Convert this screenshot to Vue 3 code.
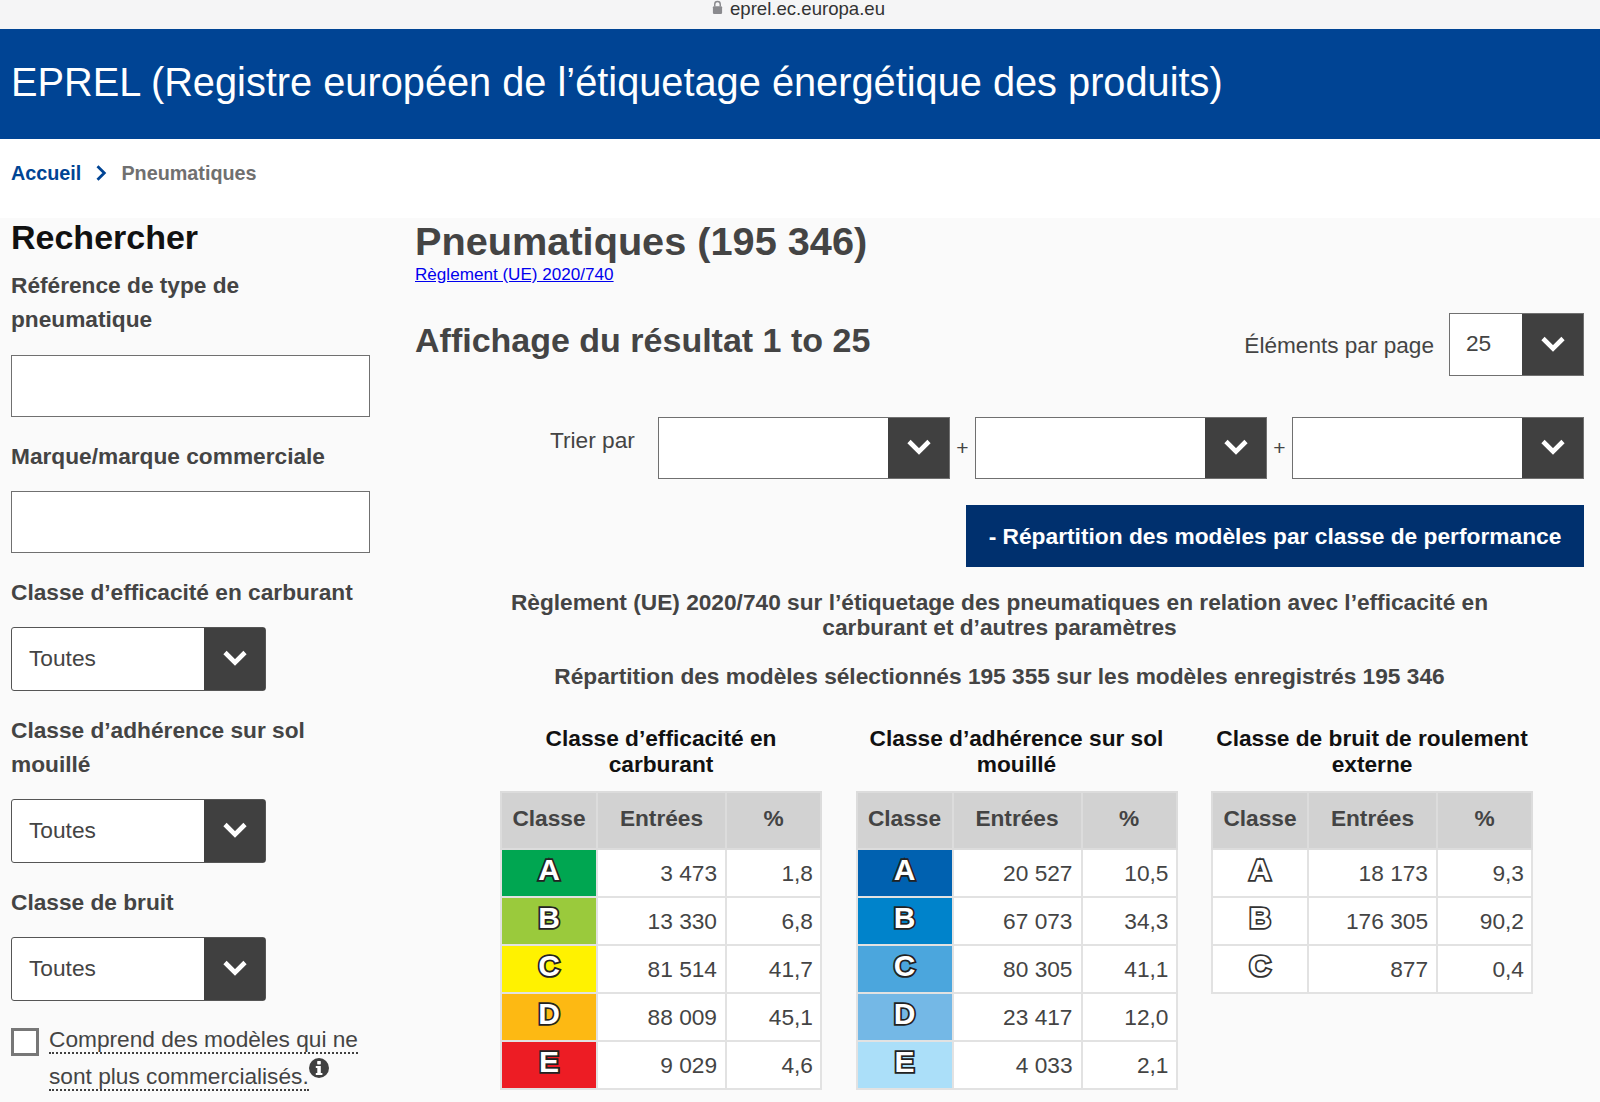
<script setup>
const sorts = [0, 1, 2]
const fuelRows = [
  ['A', '3 473', '1,8', '#00a651'],
  ['B', '13 330', '6,8', '#9aca3c'],
  ['C', '81 514', '41,7', '#fff200'],
  ['D', '88 009', '45,1', '#fdb913'],
  ['E', '9 029', '4,6', '#ed1c24']
]
const wetRows = [
  ['A', '20 527', '10,5', '#0061b0'],
  ['B', '67 073', '34,3', '#0083cb'],
  ['C', '80 305', '41,1', '#4ba6dd'],
  ['D', '23 417', '12,0', '#74b8e6'],
  ['E', '4 033', '2,1', '#abdff9']
]
const noiseRows = [
  ['A', '18 173', '9,3', ''],
  ['B', '176 305', '90,2', ''],
  ['C', '877', '0,4', '']
]
const tables = [
  { title: ['Classe d’efficacité en', 'carburant'], rows: fuelRows },
  { title: ['Classe d’adhérence sur sol', 'mouillé'], rows: wetRows },
  { title: ['Classe de bruit de roulement', 'externe'], rows: noiseRows, outline: true }
]
const filters = [
  { label: ['Classe d’efficacité en carburant'] },
  { label: ['Classe d’adhérence sur sol', 'mouillé'] },
  { label: ['Classe de bruit'] }
]
</script>

<template>
  <div class="page">
    <div class="topbar">
      <svg class="lock" viewBox="0 0 12 16" width="11" height="15">
        <path d="M3 7V4.5a3 3 0 0 1 6 0V7" fill="none" stroke="#8a8a8e" stroke-width="1.6" />
        <rect x="1" y="6.5" width="10" height="8.5" rx="1.3" fill="#8a8a8e" />
      </svg>
      <span>eprel.ec.europa.eu</span>
    </div>
    <header class="banner">EPREL (Registre européen de l’étiquetage énergétique des produits)</header>
    <nav class="crumbs">
      <a class="home">Accueil</a>
      <svg class="crumb-sep" viewBox="0 0 12 16" width="12" height="16">
        <path d="M2.5 1.2 9.3 8l-6.8 6.8" fill="none" stroke="#004494" stroke-width="2.8" />
      </svg>
      <span class="current">Pneumatiques</span>
    </nav>
    <main class="content">
      <aside class="side">
        <h2 class="search-title">Rechercher</h2>
        <div class="label first">Référence de type de<br />pneumatique</div>
        <div class="text-input"></div>
        <div class="label">Marque/marque commerciale</div>
        <div class="text-input"></div>
        <template v-for="f in filters" :key="f.label[0]">
          <div class="label">
            <template v-for="(l, i) in f.label" :key="l"><br v-if="i" />{{ l }}</template>
          </div>
          <div class="select side-select">
            <span class="select-value">Toutes</span>
            <span class="arrow">
              <svg viewBox="0 0 26 20" width="26" height="20"><path d="M3 3.5l10 10 10-10" fill="none" stroke="#fff" stroke-width="4.6" /></svg>
            </span>
          </div>
        </template>
        <div class="check-row">
          <span class="check"></span>
          <div class="check-text">
            <span class="dotted">Comprend des modèles qui ne</span><br />
            <span class="dotted">sont plus commercialisés.</span><svg class="info" viewBox="0 0 20 20" width="20" height="20">
              <circle cx="10" cy="10" r="10" fill="#404040" />
              <rect x="8.2" y="3" width="3.6" height="3.4" rx=".6" fill="#fff" />
              <path d="M6.8 8h5v7h1.6v2H6.8v-2h1.5v-5H6.8z" fill="#fff" />
            </svg>
          </div>
        </div>
      </aside>
      <section class="results">
        <h1 class="page-title">Pneumatiques (195 346)</h1>
        <a class="reg-link">Règlement (UE) 2020/740</a>
        <div class="result-head">
          <h2 class="result-title">Affichage du résultat 1 to 25</h2>
          <div class="per-page">
            <span class="per-label">Éléments par page</span>
            <div class="select page-select">
              <span class="select-value small">25</span>
              <span class="arrow">
                <svg viewBox="0 0 26 20" width="26" height="20"><path d="M3 3.5l10 10 10-10" fill="none" stroke="#fff" stroke-width="4.6" /></svg>
              </span>
            </div>
          </div>
        </div>
        <div class="sort-row">
          <span class="sort-label">Trier par</span>
          <template v-for="s in sorts" :key="s">
            <span v-if="s" class="plus">+</span>
            <div class="select sort-select">
              <span class="select-value"></span>
              <span class="arrow">
                <svg viewBox="0 0 26 20" width="26" height="20"><path d="M3 3.5l10 10 10-10" fill="none" stroke="#fff" stroke-width="4.6" /></svg>
              </span>
            </div>
          </template>
        </div>
        <div class="toggle-row">
          <button class="toggle">- Répartition des modèles par classe de performance</button>
        </div>
        <div class="reg-title">Règlement (UE) 2020/740 sur l’étiquetage des pneumatiques en relation avec l’efficacité en<br />carburant et d’autres paramètres</div>
        <div class="reg-sub">Répartition des modèles sélectionnés 195 355 sur les modèles enregistrés 195 346</div>
        <div class="tables">
          <div v-for="t in tables" :key="t.title[0]" class="table-col">
            <div class="table-title">{{ t.title[0] }}<br />{{ t.title[1] }}</div>
            <table>
              <thead>
                <tr><th class="c1">Classe</th><th class="c2">Entrées</th><th class="c3">%</th></tr>
              </thead>
              <tbody>
                <tr v-for="r in t.rows" :key="r[0]">
                  <td class="letter-cell" :style="{ background: r[3] || '#fff' }">
                    <span class="letter" :class="{ outline: t.outline }">{{ r[0] }}</span>
                  </td>
                  <td class="num num-a">{{ r[1] }}</td>
                  <td class="num num-b">{{ r[2] }}</td>
                </tr>
              </tbody>
            </table>
          </div>
        </div>
      </section>
    </main>
  </div>
</template>

<style>
html, body { margin: 0; background: #fafafa; }
</style>

<style scoped>
.page {
  width: 1600px;
  height: 1102px;
  overflow: hidden;
  font-family: "Liberation Sans", Arial, sans-serif;
  color: #444;
  background: #fafafa;
}
.topbar {
  height: 29px;
  background: #f5f5f6;
  display: flex;
  justify-content: center;
  align-items: flex-start;
  gap: 7px;
  font-size: 18.6px;
  line-height: 18px;
  color: #333;
  padding-right: 3px;
  box-sizing: border-box;
}
.banner {
  height: 110px;
  background: #004494;
  color: #fff;
  font-size: 39.75px;
  line-height: 106px;
  padding-left: 11px;
  white-space: nowrap;
}
.crumbs {
  height: 79px;
  background: #fff;
  display: flex;
  align-items: center;
  gap: 14px;
  padding-left: 11px;
  font-size: 19.8px;
  font-weight: 700;
  box-sizing: border-box;
  padding-bottom: 11px;
}
.home { color: #004494; }
.current { color: #707070; }
.content { display: flex; }
.side { width: 404px; padding-left: 11px; flex: none; }
.search-title {
  margin: 0;
  font-size: 34px;
  line-height: 38px;
  color: #111;
  font-weight: 700;
}
.label {
  font-size: 22.7px;
  line-height: 34px;
  font-weight: 700;
  color: #444;
  margin-top: 22px;
  margin-bottom: 18px;
}
.label.first { margin-top: 12px; margin-bottom: 19px; }
.text-input {
  width: 359px;
  height: 62px;
  box-sizing: border-box;
  background: #fff;
  border: 1.5px solid #707070;
}
.select {
  box-sizing: border-box;
  display: flex;
  background: #fff;
  border: 1.5px solid #707070;
}
.side-select { width: 255px; height: 64px; border-radius: 3px; border-color: #555; }
.page-select { width: 135px; height: 63px; }
.sort-select { flex: 1; height: 62px; }
.select-value {
  flex: 1;
  font-size: 22.7px;
  line-height: 60px;
  padding-left: 17px;
  color: #444;
}
.select-value.small { padding-left: 16px; line-height: 58px; }
.arrow {
  width: 61px;
  flex: none;
  background: #404040;
  display: flex;
  align-items: center;
  justify-content: center;
}
.check-row { display: flex; gap: 10px; margin-top: 27px; }
.check {
  width: 28px;
  height: 28px;
  box-sizing: border-box;
  border: 3px solid #777;
  background: #fff;
  flex: none;
}
.check-text { font-size: 22.7px; line-height: 36.6px; margin-top: -7px; white-space: nowrap; }
.dotted { border-bottom: 2px dotted #404040; }
.info { vertical-align: 12px; margin: -14px 0 -6px; }
.results { flex: 1; min-width: 0; padding-right: 16px; }
.page-title {
  margin: 0;
  font-size: 39.7px;
  line-height: 46px;
  font-weight: 700;
  color: #444;
}
.reg-link {
  display: block;
  margin-top: 1px;
  font-size: 17.1px;
  line-height: 20px;
  color: #0000ee;
  text-decoration: underline;
}
.result-head {
  display: flex;
  justify-content: space-between;
  margin-top: 28px;
}
.result-title {
  margin: 0;
  font-size: 34px;
  line-height: 54px;
  font-weight: 700;
  color: #444;
}
.per-page {
  display: flex;
  gap: 15px;
  font-size: 22.6px;
}
.per-label { line-height: 66px; }
.sort-row {
  display: flex;
  margin-top: 38px;
  padding-left: 135px;
  height: 62px;
}
.sort-label { font-size: 22.7px; line-height: 46px; width: 108px; flex: none; }
.plus { width: 25px; text-align: center; font-size: 21px; line-height: 62px; flex: none; }
.toggle-row { display: flex; justify-content: flex-end; margin-top: 26px; }
.toggle {
  width: 618px;
  height: 62px;
  border: 0;
  padding: 0;
  background: #00306e;
  color: #fff;
  font: 700 22.75px "Liberation Sans", Arial, sans-serif;
}
.reg-title {
  margin-top: 23px;
  text-align: center;
  font-size: 22.7px;
  line-height: 25px;
  font-weight: 700;
}
.reg-sub {
  margin-top: 23px;
  text-align: center;
  font-size: 22.7px;
  line-height: 26px;
  font-weight: 700;
}
.tables {
  display: flex;
  gap: 33.5px;
  margin-top: 37px;
  padding-left: 85px;
}
.table-col { width: 322px; flex: none; }
.table-title {
  text-align: center;
  font-size: 22.7px;
  line-height: 25.5px;
  font-weight: 700;
  color: #111;
  height: 65px;
  white-space: nowrap;
  margin: 0 -8px;
}
table {
  width: 320px;
  table-layout: fixed;
  border-collapse: collapse;
}
th, td {
  box-sizing: border-box;
  border: 2.5px solid #e2e2e2;
  padding: 0;
}
th {
  height: 57px;
  background: #d2d2d2;
  border-color: #dcdcdc;
  font-size: 22.7px;
  font-weight: 700;
  color: #444;
  padding-bottom: 4px;
}
.c1 { width: 96px; }
.c2 { width: 129px; }
.c3 { width: 95px; }
td { height: 48px; background: #fff; }
.num {
  text-align: right;
  font-size: 22.7px;
  color: #444;
}
.num-a { padding-right: 8px; }
.num-b { padding-right: 7px; }
.letter-cell { text-align: center; }
.letter {
  display: block;
  margin-top: -7px;
  font-size: 30px;
  line-height: 40px;
  font-weight: 700;
  color: #fff;
  -webkit-text-stroke: 3.6px #222;
  paint-order: stroke fill;
}
.letter.outline { -webkit-text-stroke: 3.6px #333; }
</style>
